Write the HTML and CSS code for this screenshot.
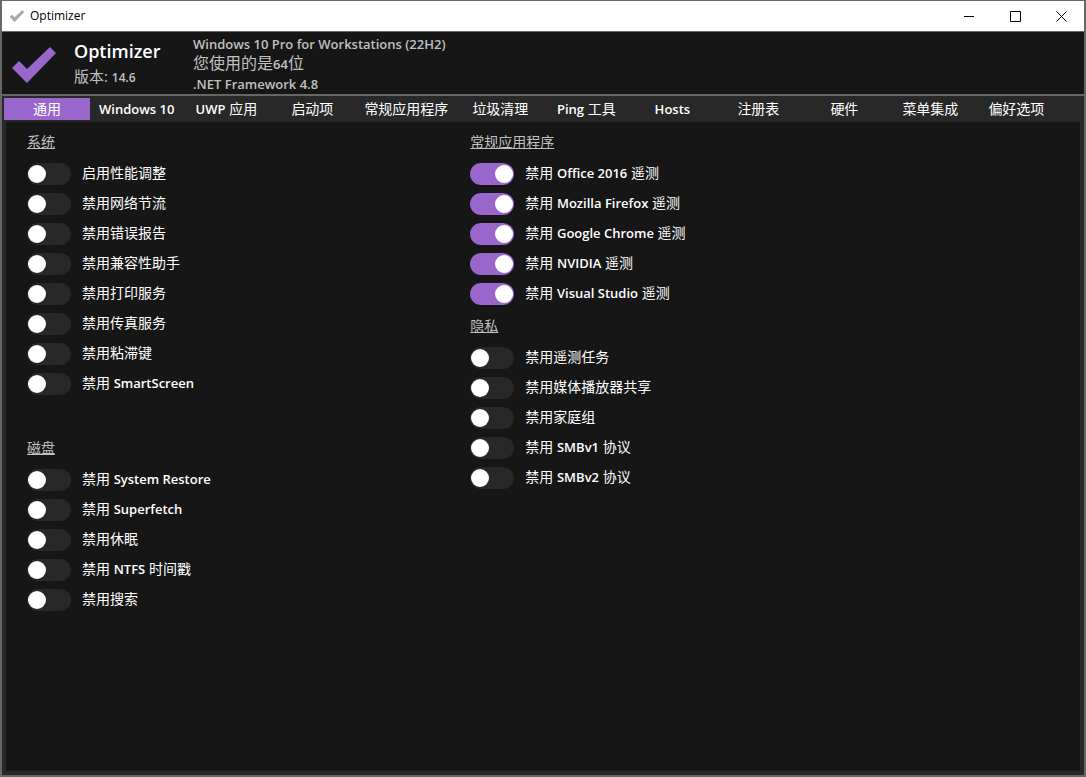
FILE: index.html
```html
<!DOCTYPE html>
<html lang="zh-CN">
<head>
<meta charset="utf-8">
<title>Optimizer</title>
<link rel="stylesheet" href="styles.css">
</head>
<body>
<div class="window">
  <div class="titlebar">
    <svg class="titlebar-icon" viewBox="0 0 44 36" aria-hidden="true"><path d="M0 21 7 14 15 22 38 0 44 6 15 36Z"/></svg>
    <span class="titlebar-text">Optimizer</span>
    <div class="caption">
      <button type="button" aria-label="最小化"><svg viewBox="0 0 11 11"><path d="M0 5.5H10"/></svg></button>
      <button type="button" aria-label="最大化"><svg viewBox="0 0 11 11"><path d="M.5.5H10.5V10.5H.5Z"/></svg></button>
      <button type="button" aria-label="关闭"><svg viewBox="0 0 11 11"><path d="M.5.5 10.5 10.5M10.5.5.5 10.5"/></svg></button>
    </div>
  </div>
  <header class="header">
    <svg class="logo" viewBox="0 0 44 36" aria-hidden="true"><path d="M0 21 7 14 15 22 38 0 44 6 15 36Z"/></svg>
    <div class="product">
      <h1>Optimizer</h1>
      <p>版本: <b>14.6</b></p>
    </div>
    <div class="system">
      <p><b>Windows 10 Pro for Workstations (22H2)</b></p>
      <p class="arch">您使用的是<b>64</b>位</p>
      <p><b>.NET Framework 4.8</b></p>
    </div>
  </header>
  <nav class="tabs">
    <button type="button" class="active">通用</button>
    <button type="button"><b>Windows 10</b></button>
    <button type="button"><b>UWP</b> 应用</button>
    <button type="button">启动项</button>
    <button type="button">常规应用程序</button>
    <button type="button">垃圾清理</button>
    <button type="button"><b>Ping</b> 工具</button>
    <button type="button"><b>Hosts</b></button>
    <button type="button">注册表</button>
    <button type="button">硬件</button>
    <button type="button">菜单集成</button>
    <button type="button">偏好选项</button>
  </nav>
  <main class="page">
    <div class="column">
      <section class="group group-system">
        <h2>系统</h2>
        <label><input type="checkbox"><span>启用性能调整</span></label>
        <label><input type="checkbox"><span>禁用网络节流</span></label>
        <label><input type="checkbox"><span>禁用错误报告</span></label>
        <label><input type="checkbox"><span>禁用兼容性助手</span></label>
        <label><input type="checkbox"><span>禁用打印服务</span></label>
        <label><input type="checkbox"><span>禁用传真服务</span></label>
        <label><input type="checkbox"><span>禁用粘滞键</span></label>
        <label><input type="checkbox"><span>禁用 <b>SmartScreen</b></span></label>
      </section>
      <section class="group">
        <h2>磁盘</h2>
        <label><input type="checkbox"><span>禁用 <b>System Restore</b></span></label>
        <label><input type="checkbox"><span>禁用 <b>Superfetch</b></span></label>
        <label><input type="checkbox"><span>禁用休眠</span></label>
        <label><input type="checkbox"><span>禁用 <b>NTFS</b> 时间戳</span></label>
        <label><input type="checkbox"><span>禁用搜索</span></label>
      </section>
    </div>
    <div class="column">
      <section class="group">
        <h2>常规应用程序</h2>
        <label><input type="checkbox" checked><span>禁用 <b>Office 2016</b> 遥测</span></label>
        <label><input type="checkbox" checked><span>禁用 <b>Mozilla Firefox</b> 遥测</span></label>
        <label><input type="checkbox" checked><span>禁用 <b>Google Chrome</b> 遥测</span></label>
        <label><input type="checkbox" checked><span>禁用 <b>NVIDIA</b> 遥测</span></label>
        <label><input type="checkbox" checked><span>禁用 <b>Visual Studio</b> 遥测</span></label>
      </section>
      <section class="group">
        <h2>隐私</h2>
        <label><input type="checkbox"><span>禁用遥测任务</span></label>
        <label><input type="checkbox"><span>禁用媒体播放器共享</span></label>
        <label><input type="checkbox"><span>禁用家庭组</span></label>
        <label><input type="checkbox"><span>禁用 <b>SMBv1</b> 协议</span></label>
        <label><input type="checkbox"><span>禁用 <b>SMBv2</b> 协议</span></label>
      </section>
    </div>
  </main>
</div>
</body>
</html>
```
FILE: styles.css
```css
* { box-sizing: border-box; }
body {
  margin: 0;
  background: #161616;
  color: #fff;
  font: 14px/20px "Open Sans", "Noto Sans CJK SC", sans-serif;
}
h1, h2, p { margin: 0; }
b { font-weight: 600; font-size: 13px; }
button { font: inherit; color: inherit; background: none; border: 0; padding: 0; }

.window {
  min-height: 100vh;
  display: flex;
  flex-direction: column;
  border: solid #666;
  border-width: 1px 2px 2px;
}
.titlebar {
  height: 31px;
  display: flex;
  align-items: center;
  background: #fff;
  color: #000;
  border-bottom: 1px solid #666;
  padding-left: 7px;
}
.titlebar-icon { width: 16px; height: 12px; fill: #a8a8a8; }
.titlebar-text { margin-left: 5px; font-size: 12px; }
.caption { margin-left: auto; display: flex; height: 100%; }
.caption button { width: 46px; display: grid; place-items: center; }
.caption svg { width: 11px; height: 11px; fill: none; stroke: #000; stroke-width: 1; }

.header {
  height: 64px;
  display: flex;
  align-items: center;
  padding-left: 10px;
  color: #c0c0c0;
  border-bottom: 2px solid #666;
}
.logo { width: 44px; height: 36px; fill: #9966cc; margin-top: 3px; }
.product { width: 119px; margin-left: 18px; padding-top: 2px; }
.product h1 { font-size: 18px; line-height: 26px; font-weight: 600; color: #fff; }
.product p { font-size: 15px; line-height: 24px; }
.product b { font-size: 12px; }
.system { padding-top: 2px; }
.system p { line-height: 19px; }
.system .arch { font-size: 16px; }

.tabs {
  display: flex;
  height: 26px;
  padding: 2px;
  background: #282828;
  white-space: nowrap;
}
.tabs button { min-width: 86px; height: 22px; padding: 0 9px; line-height: 22px; }
.tabs .active { background: #9966cc; }

.page {
  flex: 1;
  display: grid;
  grid-template-columns: 42.1% 1fr;
  padding: 10px 0 16px 21px;
  border: solid #282828;
  border-width: 0 4px 4px;
}
.group { padding-bottom: 7px; }
.group-system { padding-bottom: 39px; }
.group h2 {
  margin-bottom: 7px;
  font-size: 14px;
  line-height: 20px;
  font-weight: 400;
  color: #c0c0c0;
  text-decoration: underline;
}
.group label { display: flex; align-items: center; gap: 11px; height: 30px; }
.group label span { padding-bottom: 2px; }
.group input {
  appearance: none;
  display: flex;
  width: 44px;
  height: 22px;
  margin: 0;
  padding: 2px 1px;
  border-radius: 11px;
  background: #282828;
}
.group input::before {
  content: "";
  width: 18px;
  height: 18px;
  border-radius: 50%;
  background: #fff;
}
.group input:checked { background: #9966cc; justify-content: flex-end; }
```
